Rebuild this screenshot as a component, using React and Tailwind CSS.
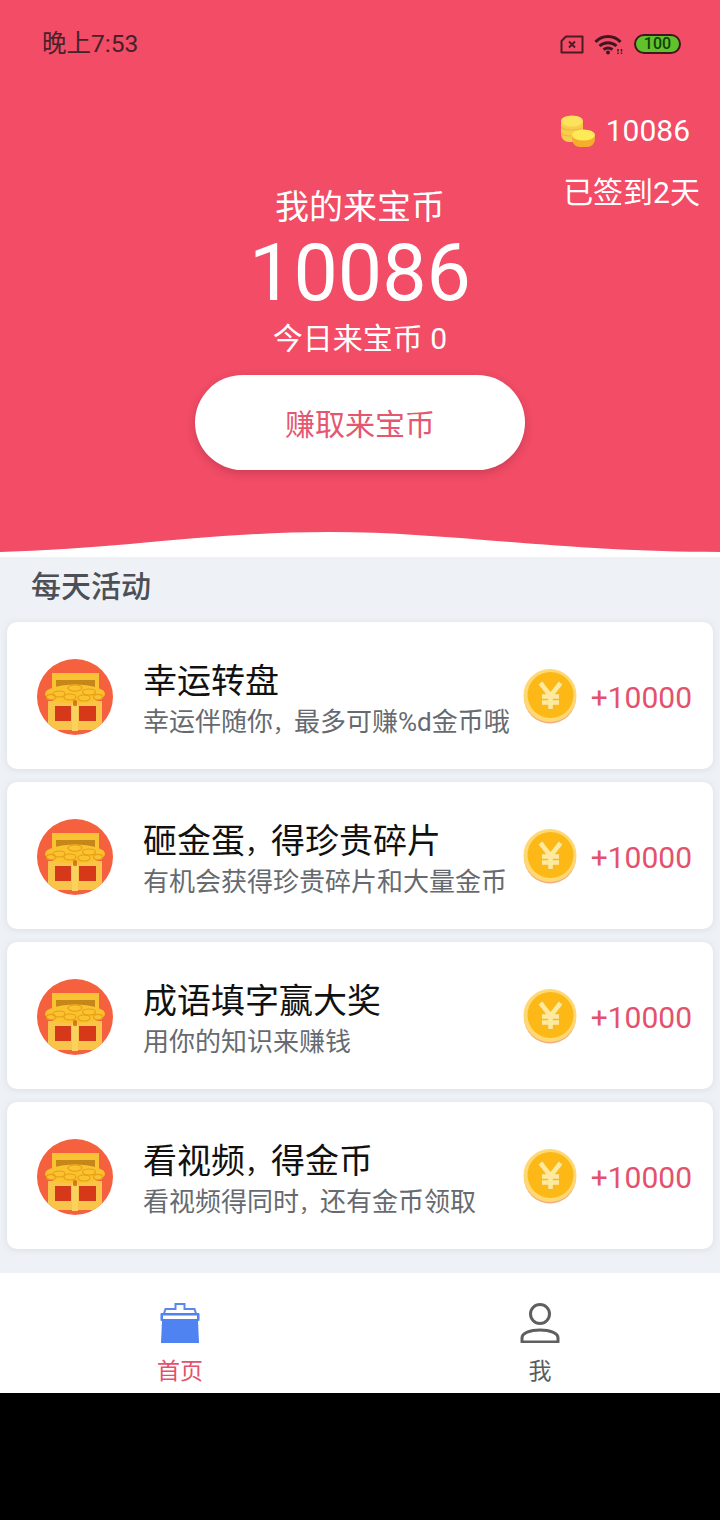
import React from 'react';

// the comma in the picture takes less than a full CJK cell
const Comma = () => <span className="text-[21px] leading-none">{'\uFF0C'}</span>;
const TitleComma = () => <span className="text-[26px] leading-none">{'\uFF0C'}</span>;

const tasks = [
  { title: '幸运转盘', desc: <>幸运伴随你<Comma />最多可赚%d金币哦</> },
  { title: <>砸金蛋<TitleComma />得珍贵碎片</>, desc: '有机会获得珍贵碎片和大量金币' },
  { title: '成语填字赢大奖', desc: '用你的知识来赚钱' },
  { title: <>看视频<TitleComma />得金币</>, desc: <>看视频得同时<Comma />还有金币领取</> },
];

const StatusIcons = () => (
  <div className="flex items-center">
    {/* sim card */}
    <svg width="24" height="19" viewBox="0 0 24 19" fill="none" stroke="#4b1c26" strokeWidth="2">
      <path d="M6 1.5h16.5v16H1.5V6z" strokeLinejoin="round" />
      <path d="M9 6.5l6 6M15 6.5l-6 6" />
    </svg>
    {/* wifi */}
    <svg className="ml-[10px]" width="29" height="21" viewBox="0 0 29 21" fill="none" stroke="#3f1720" strokeWidth="3">
      <path d="M1.5 8C8 0.5 20 0.5 26.5 8" />
      <path d="M5.5 12c5-4.5 12-4.5 17 0" />
      <path d="M9.5 15.5c3-2 6-2 9 0" />
      <circle cx="14" cy="18.5" r="2" fill="#3f1720" stroke="none" />
      <path d="M24 15v5M27.5 15v5" strokeWidth="1.5" strokeDasharray="2.6 1" />
    </svg>
    {/* battery */}
    <div className="ml-[11px] flex h-[20px] w-[47px] items-center justify-center rounded-full border-2 border-[#40161f] bg-[#62c22c] text-[16px] font-medium leading-none text-[#123f08]">
      100
    </div>
  </div>
);

const CoinStack = () => (
  <svg width="34" height="32" viewBox="0 0 34 32">
    <rect x="0" y="1" width="22" height="26" rx="8" fill="#f9cd4c" />
    <ellipse cx="11" cy="6" rx="11" ry="5.5" fill="#fde25e" />
    <path d="M0 12c3 4 19 4 22 0M0 18c3 4 19 4 22 0" stroke="#efb73c" strokeWidth="1.2" fill="none" />
    <rect x="11" y="15" width="23" height="17" rx="8" fill="#f4ae2c" />
    <ellipse cx="22.5" cy="20" rx="11.5" ry="5.5" fill="#fdea57" />
  </svg>
);

const ChestIcon = () => (
  <svg className="mt-[2px] shrink-0" width="76" height="76" viewBox="0 0 76 76">
    <defs>
      <clipPath id="chest-clip">
        <circle cx="38" cy="38" r="38" />
      </clipPath>
    </defs>
    <circle cx="38" cy="38" r="38" fill="#f5603f" />
    <g clipPath="url(#chest-clip)">
      <path d="M15 14h47v16H15z" fill="#f8c234" />
      <path d="M19 21h39v8H19z" fill="#c5871a" />
      <path d="M11 42h54v29H11z" fill="#f8c54a" />
      <path d="M18 47h16v15H18zM42 47h17v15H42z" fill="#d5391a" />
      <rect x="35" y="44" width="6" height="28" fill="#fad35f" />
      <ellipse cx="38" cy="35" rx="30" ry="9.5" fill="#f9c22e" />
      <g fill="none" stroke="#e99f16" strokeWidth="1.2">
        <ellipse cx="22" cy="35" rx="6" ry="3" />
        <ellipse cx="38" cy="29" rx="7" ry="3.2" />
        <ellipse cx="52" cy="33" rx="6.5" ry="3" />
        <ellipse cx="33" cy="38" rx="6" ry="3" />
        <ellipse cx="47" cy="39" rx="6" ry="3" />
        <ellipse cx="14" cy="38" rx="4.5" ry="2.6" />
        <ellipse cx="61" cy="38" rx="4.5" ry="2.6" />
      </g>
      <rect x="36" y="41" width="4" height="6" rx="1.5" fill="#d9791c" />
    </g>
  </svg>
);

const YenCoin = () => (
  <svg className="shrink-0" width="56" height="56" viewBox="0 0 56 56">
    <circle cx="28" cy="29.5" r="26" fill="#f08f55" opacity="0.75" />
    <circle cx="28" cy="27.5" r="26.5" fill="#fdd873" />
    <circle cx="28.5" cy="27" r="23" fill="#fcb816" />
    <path
      d="M18.5 15l10 13L38.5 15M28.5 27v14M20 28.5h17M20 34.5h17"
      fill="none"
      stroke="#fde9a0"
      strokeWidth="4.6"
    />
  </svg>
);

const TaskCard = ({ title, desc }) => (
  <div className="flex h-[147px] items-center rounded-[10px] bg-white pl-[30px] pr-[21px] shadow-[0_1px_6px_rgba(180,190,205,0.35)]">
    <ChestIcon />
    <div className="ml-[30px] min-w-0 flex-1 pt-[7px]">
      <div className="text-[34px] leading-[44px] text-[#111111]">{title}</div>
      <div className="mt-[1px] whitespace-nowrap text-[26px] leading-[36px] text-[#666a70]">{desc}</div>
    </div>
    <YenCoin />
    <div className="ml-[13px] pt-[4px] text-[30px] leading-none text-[#e5506d]">+10000</div>
  </div>
);

const HomeIcon = () => (
  <svg width="40" height="40" viewBox="0 0 40 40">
    <path
      d="M15.5 6V1h9v5h10l2 6h-33l2-6z"
      fill="none"
      stroke="#5b87e8"
      strokeWidth="2"
    />
    <rect x="0.5" y="10" width="39" height="8" rx="1" fill="#4f83f1" />
    <rect x="3" y="12.5" width="34" height="3.5" fill="#ffffff" />
    <path d="M2 18h36l1 22H1z" fill="#4f83f1" />
  </svg>
);

const UserIcon = () => (
  <svg width="40" height="40" viewBox="0 0 40 40" fill="none" stroke="#5f5f5f" strokeWidth="3">
    <circle cx="20" cy="11" r="9.5" />
    <path d="M2 39v-4c0-5 8-8 18-8s18 3 18 8v4z" strokeLinejoin="round" />
  </svg>
);

export default function App() {
  return (
    <div
      lang="zh-CN"
      className="flex h-[1520px] w-[720px] flex-col overflow-hidden bg-black font-['Roboto','Noto_Sans_CJK_SC',sans-serif]"
    >
      {/* red header */}
      <div className="relative h-[552px] shrink-0 bg-[#f24c66] text-white">
        <div className="flex items-center justify-between pl-[42px] pr-[39px] pt-[29px]">
          <span className="text-[24.5px] leading-[30px] text-[#43222a]">晚上7:53</span>
          <StatusIcons />
        </div>

        <div className="absolute right-[20px] top-[113px] flex flex-col items-end">
          <div className="mr-[10px] flex items-center">
            <CoinStack />
            <span className="ml-[11px] text-[30px] leading-[36px]">10086</span>
          </div>
          <div className="mt-[22px] text-[30px] leading-[44px]">已签到2天</div>
        </div>

        <div className="flex flex-col items-center pt-[126px]">
          <div className="text-[34px] leading-[44px]">我的来宝币</div>
          <div className="mt-[2px] text-[79px] leading-[84px]">10086</div>
          <div className="mt-[4px] text-[30px] leading-[40px]">今日来宝币 0</div>
          <div className="mt-[16px] flex h-[95px] w-[330px] items-center justify-center rounded-full bg-white pt-[3px] text-[30px] text-[#e5566f] shadow-[0_3px_8px_rgba(120,30,50,0.3)]">
            赚取来宝币
          </div>
        </div>

        <svg className="absolute bottom-0 left-0" width="720" height="21" viewBox="0 0 720 21">
          <path d="M0 21C110 19 210 1 330 1C450 1 560 21 720 21z" fill="#ffffff" />
        </svg>
      </div>
      <div className="h-[5px] shrink-0 bg-white" />

      {/* activity list */}
      <div className="h-[716px] shrink-0 bg-[#eef1f5] px-[7px]">
        <div className="pl-[24px] pt-[10px] text-[30px] font-medium leading-[40px] text-[#4c4f55]">每天活动</div>
        <div className="mt-[15px] flex flex-col gap-[13px]">
          {tasks.map((t, i) => (
            <TaskCard key={i} title={t.title} desc={t.desc} />
          ))}
        </div>
      </div>

      {/* bottom tabs */}
      <div className="grid h-[120px] shrink-0 grid-cols-2 bg-white pt-[30px]">
        <div className="flex flex-col items-center">
          <HomeIcon />
          <span className="mt-[13px] text-[23px] leading-[32px] text-[#e5506d]">首页</span>
        </div>
        <div className="flex flex-col items-center">
          <UserIcon />
          <span className="mt-[13px] text-[23px] leading-[32px] text-[#5c5c5c]">我</span>
        </div>
      </div>
    </div>
  );
}
